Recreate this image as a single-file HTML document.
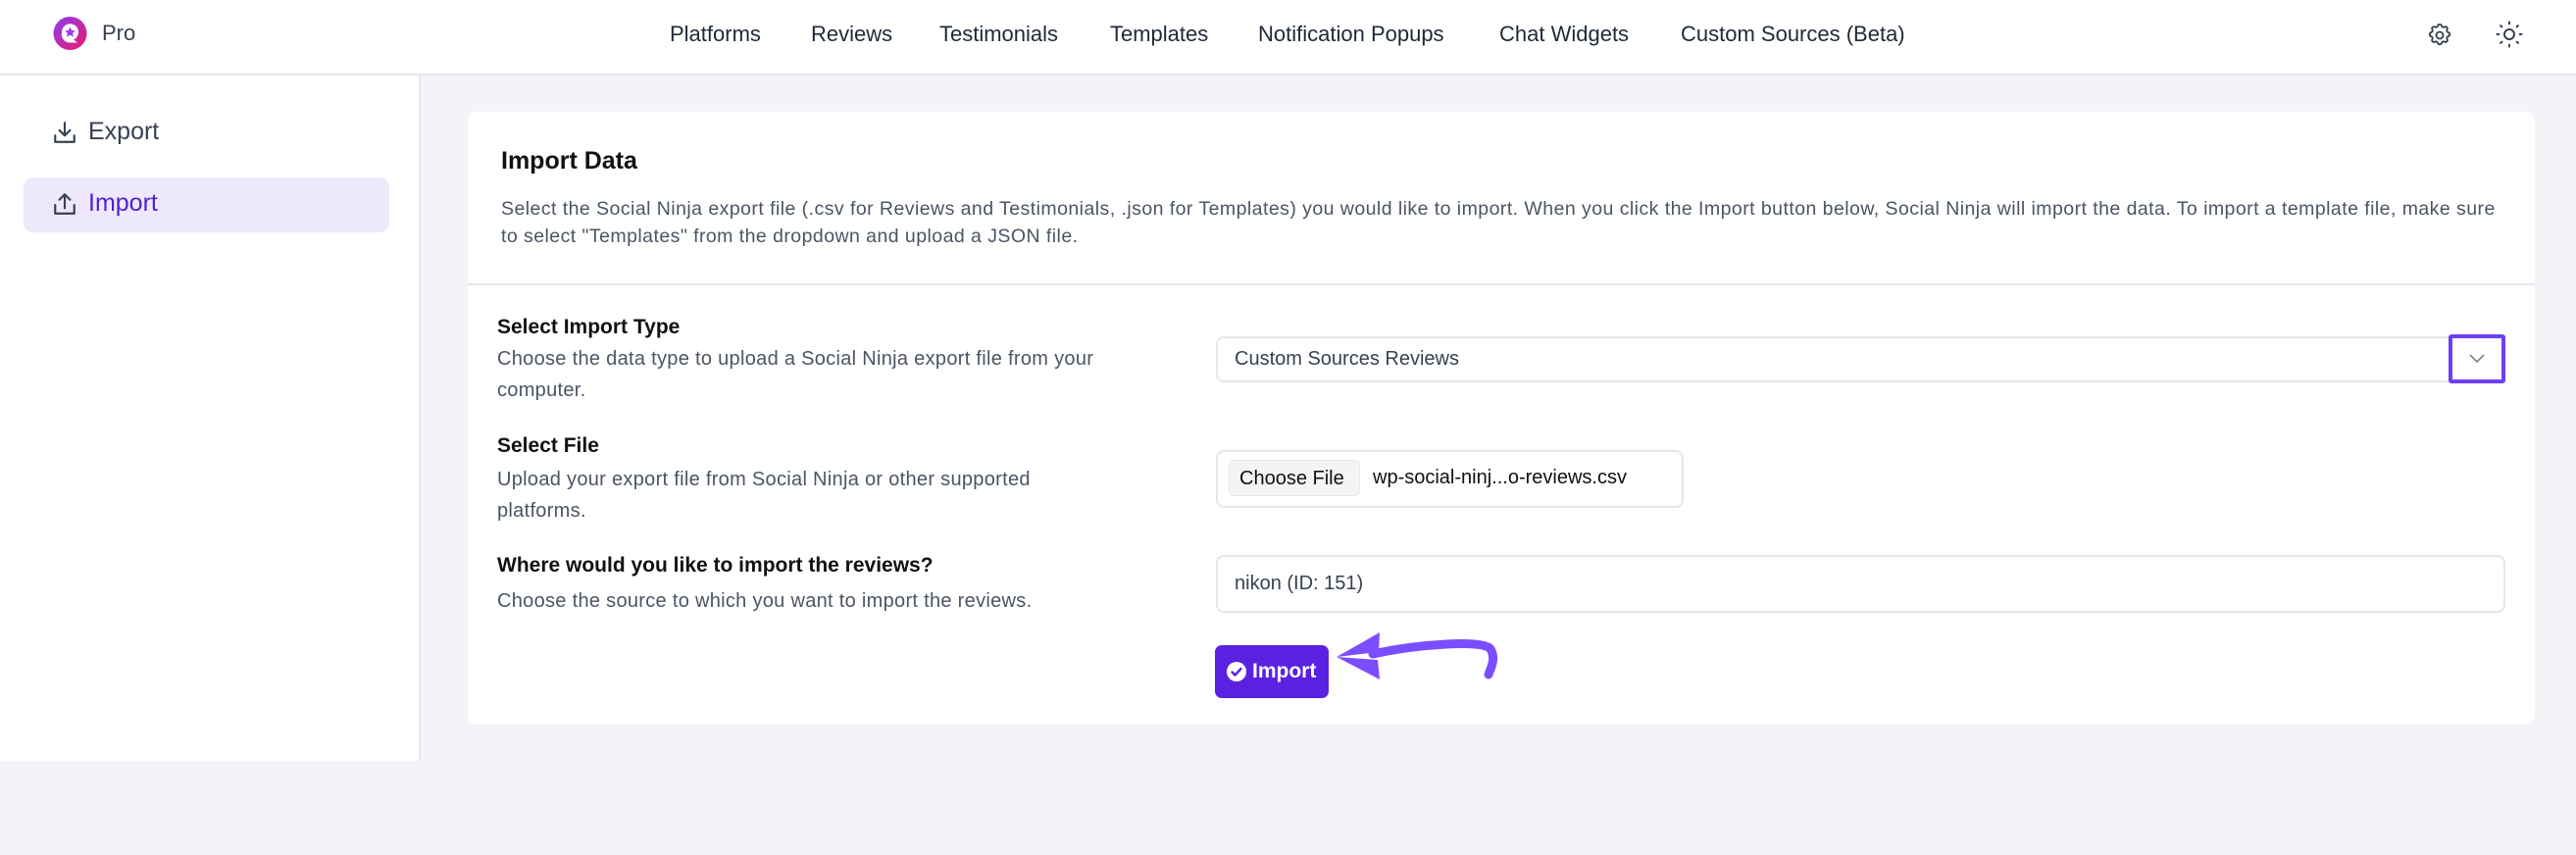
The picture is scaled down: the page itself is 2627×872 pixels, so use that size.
<!DOCTYPE html>
<html><head><meta charset="utf-8"><style>
*{box-sizing:border-box;margin:0;padding:0}
body{width:2627px;height:872px;background:#f3f4f8;font-family:"Liberation Sans",sans-serif;position:relative;overflow:hidden;color:#111827}
.abs{position:absolute;white-space:nowrap}
.hdr{position:absolute;left:0;top:0;width:2627px;height:77px;background:#fff;border-bottom:2px solid #e5e7eb}
.nav{font-size:22px;font-weight:500;color:#1f2937;top:22px}
.side{position:absolute;left:0;top:77px;width:429px;height:699px;background:#fff;border-right:2px solid #e5e7eb}
.card{position:absolute;left:477px;top:114px;width:2108px;height:625px;background:#fff;border-radius:10px}
.lbl{font-size:21px;font-weight:600;color:#111}
.dsc{font-size:20px;color:#4b5563;line-height:32px;white-space:normal;letter-spacing:0.3px}
.inp{position:absolute;background:#fff;border:2px solid #e5e7eb;border-radius:8px;font-size:20px;color:#374151}
</style></head><body>
<div class="hdr"></div>
<svg class="abs" style="left:54px;top:16px" width="35" height="36" viewBox="0 0 35 36"><defs><linearGradient id="g" x1="0" y1="0" x2="1" y2="1"><stop offset="0" stop-color="#8b3cf0"/><stop offset="1" stop-color="#f0196c"/></linearGradient></defs><circle cx="17.5" cy="18" r="17" fill="url(#g)"/><path d="M9 17a8.5 8.5 0 1 1 12 7.5l4 3h-8.5A8.5 8.5 0 0 1 9 17z" fill="#fff"/><path d="M17.5 11.5l1.7 3.5 3.6.4-2.7 2.5.8 3.6-3.4-1.9-3.4 1.9.8-3.6-2.7-2.5 3.6-.4z" fill="#9b3cf0"/></svg>
<div class="abs" style="left:104px;top:21px;font-size:22px;color:#374151">Pro</div>
<div class="abs nav" style="left:683px">Platforms</div>
<div class="abs nav" style="left:827px">Reviews</div>
<div class="abs nav" style="left:958px">Testimonials</div>
<div class="abs nav" style="left:1132px">Templates</div>
<div class="abs nav" style="left:1283px">Notification Popups</div>
<div class="abs nav" style="left:1529px">Chat Widgets</div>
<div class="abs nav" style="left:1714px">Custom Sources (Beta)</div>
<svg class="abs" style="left:2474px;top:22px" width="28" height="28" viewBox="0 0 24 24" fill="none" stroke="#374151" stroke-width="1.6"><path d="M10.3 3.6c.4-1.5 2.9-1.5 3.4 0a1.7 1.7 0 0 0 2.6 1.1c1.4-.8 3 .8 2.2 2.200a1.7 1.7 0 0 0 1.1 2.6c1.5.4 1.5 2.9 0 3.4a1.7 1.7 0 0 0-1.1 2.6c.8 1.4-.8 3-2.2 2.2a1.7 1.7 0 0 0-2.6 1.1c-.4 1.5-2.9 1.5-3.4 0a1.7 1.7 0 0 0-2.6-1.1c-1.4.8-3-.8-2.2-2.2a1.7 1.7 0 0 0-1.1-2.6c-1.5-.4-1.5-2.9 0-3.4a1.7 1.7 0 0 0 1.1-2.6c-.8-1.4.8-3 2.2-2.2a1.7 1.7 0 0 0 2.6-1.1z"/><circle cx="12" cy="12" r="3"/></svg>
<svg class="abs" style="left:2544px;top:20px" width="30" height="30" viewBox="0 0 24 24" fill="none" stroke="#374151" stroke-width="1.6" stroke-linecap="round"><circle cx="12" cy="12" r="4"/><path d="M12 2v1.5M12 20.5V22M2 12h1.5M20.5 12H22M4.9 4.9l1 1M18.1 18.1l1 1M4.9 19.1l1-1M18.1 5.9l1-1"/></svg>
<div class="side"></div>
<svg class="abs" style="left:53px;top:122px" width="26" height="26" viewBox="0 0 24 24" fill="none" stroke="#374151" stroke-width="2" stroke-linecap="round" stroke-linejoin="round"><path d="M3 15v6h18v-6M12 3v12M7 10l5 5 5-5"/></svg>
<div class="abs" style="left:90px;top:120px;font-size:25px;color:#374151">Export</div>
<div class="abs" style="left:24px;top:181px;width:373px;height:56px;background:#ede8fb;border-radius:10px"></div>
<svg class="abs" style="left:53px;top:195px" width="26" height="26" viewBox="0 0 24 24" fill="none" stroke="#374151" stroke-width="2" stroke-linecap="round" stroke-linejoin="round"><path d="M3 13v8h18v-8M12 16V3M7 8l5-5 5 5"/></svg>
<div class="abs" style="left:90px;top:193px;font-size:25px;color:#4f23cf">Import</div>
<div class="card"></div>
<div class="abs" style="left:511px;top:150px;font-size:25px;font-weight:600;color:#111">Import Data</div>
<div class="abs dsc" style="left:511px;top:199px;width:2035px;font-size:19.5px;line-height:28px;letter-spacing:0.45px">Select the Social Ninja export file (.csv for Reviews and Testimonials, .json for Templates) you would like to import. When you click the Import button below, Social Ninja will import the data. To import a template file, make sure to select "Templates" from the dropdown and upload a JSON file.</div>
<div class="abs" style="left:477px;top:289px;width:2108px;height:2px;background:#e5e7eb"></div>
<div class="abs lbl" style="left:507px;top:322px">Select Import Type</div>
<div class="abs dsc" style="left:507px;top:350px;width:670px">Choose the data type to upload a Social Ninja export file from your computer.</div>
<div class="abs lbl" style="left:507px;top:443px">Select File</div>
<div class="abs dsc" style="left:507px;top:473px;width:620px">Upload your export file from Social Ninja or other supported platforms.</div>
<div class="abs lbl" style="left:507px;top:565px">Where would you like to import the reviews?</div>
<div class="abs dsc" style="left:507px;top:597px;width:690px">Choose the source to which you want to import the reviews.</div>
<div class="inp" style="left:1240px;top:343px;width:1315px;height:47px;padding:10px 17px">Custom Sources Reviews</div>
<div class="abs" style="left:2497px;top:341px;width:58px;height:50px;border:4px solid #6d3ff5;border-radius:3px;background:#fff"></div>
<svg class="abs" style="left:2516px;top:360px" width="20" height="12" viewBox="0 0 20 12" fill="none" stroke="#6b7280" stroke-width="1.5"><path d="M3 2l7 7 7-7"/></svg>
<div class="inp" style="left:1240px;top:459px;width:477px;height:59px"></div>
<div class="abs" style="left:1253px;top:469px;width:134px;height:37px;background:#f3f4f6;border:1px solid #e5e7eb;border-radius:5px;font-size:20px;color:#111;padding:7px 10px">Choose File</div>
<div class="abs" style="left:1400px;top:476px;font-size:20px;color:#111">wp-social-ninj...o-reviews.csv</div>
<div class="inp" style="left:1240px;top:566px;width:1315px;height:59px;padding:16px 17px">nikon (ID: 151)</div>
<div class="abs" style="left:1239px;top:658px;width:116px;height:54px;background:#5a22e0;border-radius:7px;display:flex;align-items:center;padding-left:12px;gap:6px">
<svg width="20" height="20" viewBox="0 0 20 20"><circle cx="10" cy="10" r="10" fill="#fff"/><path d="M5.5 10.5l3 3 6-6.5" fill="none" stroke="#5a22e0" stroke-width="2.4" stroke-linecap="round" stroke-linejoin="round"/></svg>
<span style="font-size:21px;font-weight:600;color:#fff">Import</span></div>
<svg class="abs" style="left:1355px;top:640px" width="180" height="60" viewBox="0 0 180 60"><path d="M8 30L52 5l-1 20z M8 30l44 23-2-20z" fill="#7c4dff"/><path d="M45 27C90 17 160 12 165 22c6 10 0 20-2 26" fill="none" stroke="#7c4dff" stroke-width="9" stroke-linecap="round"/></svg>
</body></html>
